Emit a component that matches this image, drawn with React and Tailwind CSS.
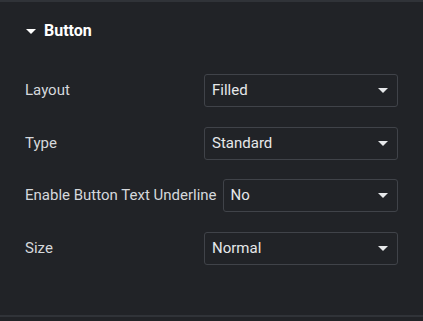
import React from 'react';

const rows = [
  { label: 'Layout', value: 'Filled' },
  { label: 'Type', value: 'Standard' },
  { label: 'Enable Button Text Underline', value: 'No' },
  { label: 'Size', value: 'Normal' },
];

const Caret = ({ className }) => (
  <svg width="10" height="5" viewBox="0 0 10 5" className={className}>
    <path d="M0 0h10L5 5z" fill="currentColor" />
  </svg>
);

const SelectRow = ({ label, value }) => (
  <div className="flex items-center">
    <div className="min-w-[179px] pr-[6px] text-[15px] text-[#d5d8dc] whitespace-nowrap">{label}</div>
    <div className="flex-1 h-[33px] flex items-center justify-between pl-[7px] pr-[9px] border border-[#404349] rounded-[3px] text-[15px] text-[#e6e8ea]">
      <span>{value}</span>
      <Caret className="text-[#e6e8ea]" />
    </div>
  </div>
);

export default function App() {
  return (
    <div className="w-[423px] h-[321px] bg-[#212327] flex flex-col" style={{ fontFamily: 'Roboto, "Liberation Sans", sans-serif' }}>
      <div className="h-[2px] bg-[#303338]" />
      <div className="flex-1 flex flex-col px-[25px]">
        <div className="flex items-center gap-[8px] h-[58px] pl-[1px] text-white">
          <Caret className="text-white" />
          <span className="text-[16px] font-bold">Button</span>
        </div>
        <div className="flex flex-col gap-[19.5px] mt-[14px]">
          {rows.map((r) => (
            <SelectRow key={r.label} label={r.label} value={r.value} />
          ))}
        </div>
      </div>
      <div className="h-[2px] bg-[#303338] mb-[4px]" />
    </div>
  );
}
